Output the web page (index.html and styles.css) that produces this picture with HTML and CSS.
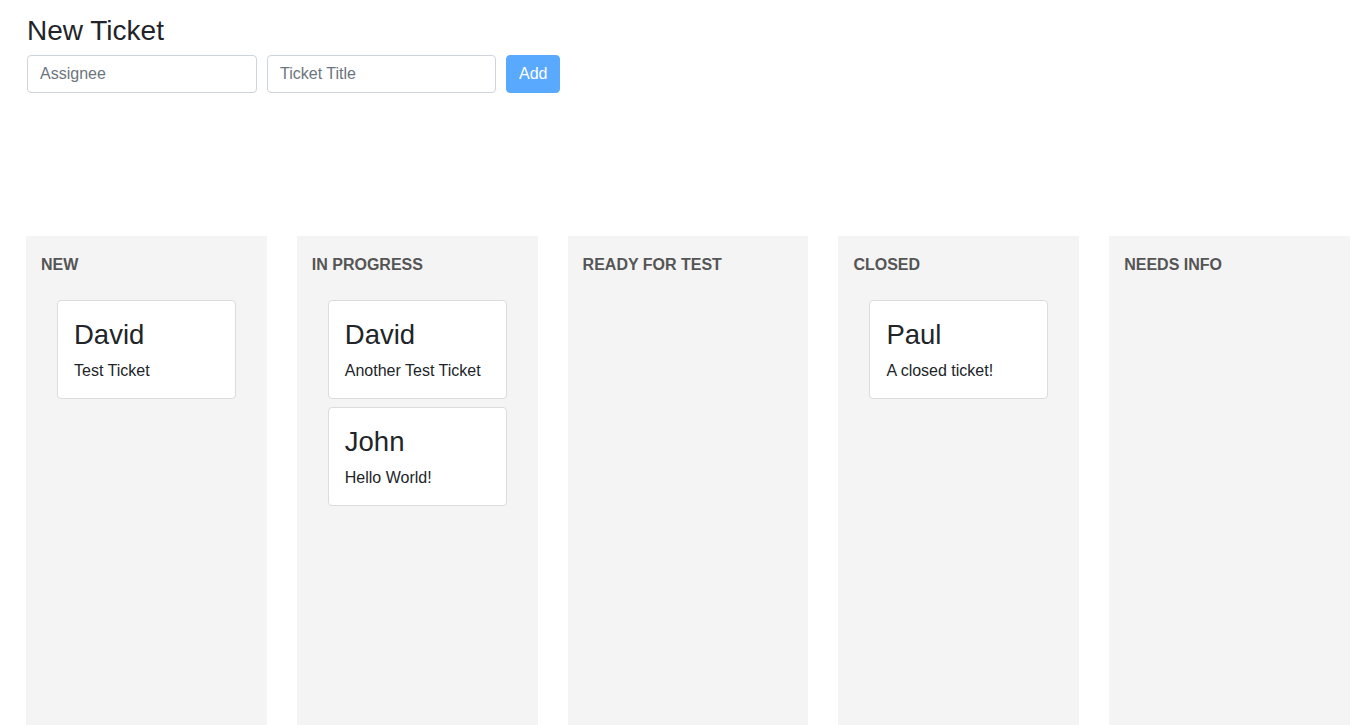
FILE: index.html
```html
<!DOCTYPE html>
<html lang="en">
<head>
<meta charset="utf-8">
<title>Tickets</title>
<link rel="stylesheet" href="styles.css">
</head>
<body>
<div class="page">
  <section class="new-ticket">
    <h2 class="title">New Ticket</h2>
    <form class="ticket-form">
      <input class="field" type="text" placeholder="Assignee">
      <input class="field" type="text" placeholder="Ticket Title">
      <button class="btn-add" type="button">Add</button>
    </form>
  </section>
  <section class="board">
    <div class="column">
      <h4 class="col-title">NEW</h4>
      <div class="cards">
        <div class="card"><h3 class="card-name">David</h3><p class="card-text">Test Ticket</p></div>
      </div>
    </div>
    <div class="column">
      <h4 class="col-title">IN PROGRESS</h4>
      <div class="cards">
        <div class="card"><h3 class="card-name">David</h3><p class="card-text">Another Test Ticket</p></div>
        <div class="card"><h3 class="card-name">John</h3><p class="card-text">Hello World!</p></div>
      </div>
    </div>
    <div class="column">
      <h4 class="col-title">READY FOR TEST</h4>
      <div class="cards"></div>
    </div>
    <div class="column">
      <h4 class="col-title">CLOSED</h4>
      <div class="cards">
        <div class="card"><h3 class="card-name">Paul</h3><p class="card-text">A closed ticket!</p></div>
      </div>
    </div>
    <div class="column">
      <h4 class="col-title">NEEDS INFO</h4>
      <div class="cards"></div>
    </div>
  </section>
</div>
</body>
</html>
```

FILE: styles.css
```css
* { box-sizing: border-box; }
html, body { margin: 0; padding: 0; }
body {
  font-family: "Liberation Sans", Arial, Helvetica, sans-serif;
  font-size: 16px;
  line-height: 1.5;
  color: #212529;
  background: #fff;
}
.page {
  padding: 14px 22px 0 26px;
}
.new-ticket {
  padding-left: 1px;
}
.title {
  margin: 0 0 8px 0;
  font-size: 28px;
  font-weight: 400;
  line-height: 33px;
}
.ticket-form {
  display: flex;
  gap: 10px;
  margin: 0;
}
.field {
  width: 230px;
  height: 38px;
  padding: 6px 12px;
  border: 1px solid #ced4da;
  border-radius: 4px;
  font-family: inherit;
  font-size: 16px;
  color: #495057;
  background: #fff;
}
.field::placeholder { color: #6c757d; opacity: 1; }
.field + .field { width: 229px; }
.btn-add {
  height: 38px;
  padding: 6px 12px;
  border: 1px solid #59a9ff;
  border-radius: 4px;
  background: #59a9ff;
  color: #fff;
  font-family: inherit;
  font-size: 16px;
  line-height: 1.5;
}
.board {
  margin-top: 143px;
  display: grid;
  grid-template-columns: repeat(5, 1fr);
  gap: 30px;
}
.column {
  background: #f4f4f4;
  min-height: 489px;
  padding: 17px 15px 0 15px;
}
.col-title {
  margin: 0 0 23px 0;
  font-size: 16px;
  font-weight: 700;
  line-height: 1.5;
  color: #555;
}
.cards {
  padding: 0 16px;
  display: flex;
  flex-direction: column;
  gap: 8px;
}
.card {
  background: #fff;
  border: 1px solid #dcdcdc;
  border-radius: 4px;
  padding: 17px 16px 15px 16px;
}
.card-name {
  margin: 0 0 8px 0;
  font-size: 27.5px;
  font-weight: 400;
  line-height: 1.2;
}
.card-text {
  margin: 0;
  font-size: 16px;
  line-height: 1.5;
}
```
